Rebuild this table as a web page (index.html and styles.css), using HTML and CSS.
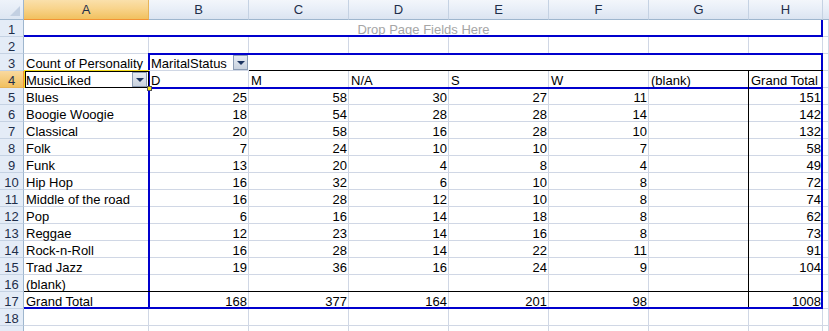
FILE: index.html
```html
<!DOCTYPE html>
<html>
<head>
<meta charset="utf-8">
<link rel="stylesheet" href="styles.css">
</head>
<body>
<div class="sheet">
  <div class="cells">
    <div class="corner"><span class="tri"></span></div>
    <div class="ch ch-sel">A</div><div class="ch">B</div><div class="ch">C</div><div class="ch">D</div><div class="ch">E</div><div class="ch">F</div><div class="ch">G</div><div class="ch">H</div><div class="ch ch-last"></div>

    <div class="rh">1</div><div class="c span-ah page">Drop Page Fields Here</div><div class="c"></div>

    <div class="rh">2</div><div class="c"></div><div class="c"></div><div class="c"></div><div class="c"></div><div class="c"></div><div class="c"></div><div class="c"></div><div class="c"></div><div class="c"></div>

    <div class="rh">3</div><div class="c">Count of Personality</div><div class="c fieldcell nor">MaritalStatus<span class="dd"></span></div><div class="c span-ch"></div><div class="c"></div>

    <div class="rh rh-sel">4</div><div class="c fieldcell">MusicLiked<span class="dd"></span></div><div class="c">D</div><div class="c">M</div><div class="c">N/A</div><div class="c">S</div><div class="c">W</div><div class="c">(blank)</div><div class="c">Grand Total</div><div class="c"></div>

    <div class="rh">5</div><div class="c">Blues</div><div class="c n">25</div><div class="c n">58</div><div class="c n">30</div><div class="c n">27</div><div class="c n">11</div><div class="c n"></div><div class="c n">151</div><div class="c"></div>
    <div class="rh">6</div><div class="c">Boogie Woogie</div><div class="c n">18</div><div class="c n">54</div><div class="c n">28</div><div class="c n">28</div><div class="c n">14</div><div class="c n"></div><div class="c n">142</div><div class="c"></div>
    <div class="rh">7</div><div class="c">Classical</div><div class="c n">20</div><div class="c n">58</div><div class="c n">16</div><div class="c n">28</div><div class="c n">10</div><div class="c n"></div><div class="c n">132</div><div class="c"></div>
    <div class="rh">8</div><div class="c">Folk</div><div class="c n">7</div><div class="c n">24</div><div class="c n">10</div><div class="c n">10</div><div class="c n">7</div><div class="c n"></div><div class="c n">58</div><div class="c"></div>
    <div class="rh">9</div><div class="c">Funk</div><div class="c n">13</div><div class="c n">20</div><div class="c n">4</div><div class="c n">8</div><div class="c n">4</div><div class="c n"></div><div class="c n">49</div><div class="c"></div>
    <div class="rh">10</div><div class="c">Hip Hop</div><div class="c n">16</div><div class="c n">32</div><div class="c n">6</div><div class="c n">10</div><div class="c n">8</div><div class="c n"></div><div class="c n">72</div><div class="c"></div>
    <div class="rh">11</div><div class="c">Middle of the road</div><div class="c n">16</div><div class="c n">28</div><div class="c n">12</div><div class="c n">10</div><div class="c n">8</div><div class="c n"></div><div class="c n">74</div><div class="c"></div>
    <div class="rh">12</div><div class="c">Pop</div><div class="c n">6</div><div class="c n">16</div><div class="c n">14</div><div class="c n">18</div><div class="c n">8</div><div class="c n"></div><div class="c n">62</div><div class="c"></div>
    <div class="rh">13</div><div class="c">Reggae</div><div class="c n">12</div><div class="c n">23</div><div class="c n">14</div><div class="c n">16</div><div class="c n">8</div><div class="c n"></div><div class="c n">73</div><div class="c"></div>
    <div class="rh">14</div><div class="c">Rock-n-Roll</div><div class="c n">16</div><div class="c n">28</div><div class="c n">14</div><div class="c n">22</div><div class="c n">11</div><div class="c n"></div><div class="c n">91</div><div class="c"></div>
    <div class="rh">15</div><div class="c">Trad Jazz</div><div class="c n">19</div><div class="c n">36</div><div class="c n">16</div><div class="c n">24</div><div class="c n">9</div><div class="c n"></div><div class="c n">104</div><div class="c"></div>
    <div class="rh">16</div><div class="c">(blank)</div><div class="c n"></div><div class="c n"></div><div class="c n"></div><div class="c n"></div><div class="c n"></div><div class="c n"></div><div class="c n"></div><div class="c"></div>
    <div class="rh">17</div><div class="c">Grand Total</div><div class="c n">168</div><div class="c n">377</div><div class="c n">164</div><div class="c n">201</div><div class="c n">98</div><div class="c n"></div><div class="c n">1008</div><div class="c"></div>

    <div class="rh">18</div><div class="c"></div><div class="c"></div><div class="c"></div><div class="c"></div><div class="c"></div><div class="c"></div><div class="c"></div><div class="c"></div><div class="c"></div>
    <div class="rh"></div><div class="c"></div><div class="c"></div><div class="c"></div><div class="c"></div><div class="c"></div><div class="c"></div><div class="c"></div><div class="c"></div><div class="c"></div>
  </div>

  <div class="frames">
    <div class="f-page"></div>
    <div class="f-main"></div>
    <div class="f-colhdr"></div>
    <div class="f-total-col"></div>
    <div class="f-total-row"></div>
    <div class="f-active"><div class="f-active-in"></div><span class="handle"></span></div>
  </div>
</div>
</body>
</html>
```

FILE: styles.css
```css
html, body {
  margin: 0;
  padding: 0;
  background: #ffffff;
}

.sheet {
  display: grid;
  width: 829px;
  height: 331px;
  overflow: hidden;
  font-family: "Liberation Sans", Arial, sans-serif;
  font-size: 13px;
  color: #000;
}

.cells, .frames {
  grid-area: 1 / 1;
  display: grid;
  grid-template-columns: 24px 125px 100px 100px 100px 100px 100px 100px 74px 1fr;
  grid-template-rows: 20px repeat(19, 17px);
}

.frames {
  pointer-events: none;
}

/* headers */
.corner {
  background: linear-gradient(#eef3fa, #dde6f2);
  border-right: 1px solid #9eb6ce;
  border-bottom: 1px solid #9eb6ce;
  box-sizing: border-box;
  display: flex;
  justify-content: flex-end;
  align-items: flex-end;
  padding: 0 3px 3px 0;
}
.tri {
  width: 0;
  height: 0;
  border-left: 10px solid transparent;
  border-bottom: 10px solid #c3d0e2;
}

.ch {
  box-sizing: border-box;
  background: linear-gradient(#f3f6fb 0%, #e9eff8 45%, #dbe4f1 100%);
  border-right: 1px solid #c5d2e3;
  border-bottom: 1px solid #9eb6ce;
  text-align: center;
  line-height: 19px;
  color: #1e2e4a;
  font-size: 13px;
}
.ch-sel {
  background: linear-gradient(#fae0ab 0%, #f8d48c 45%, #f1c15f 100%);
  border-bottom: 1px solid #f29436;
  border-right: 1px solid #e7b457;
}
.ch-last {
  border-right: none;
}

.rh {
  box-sizing: border-box;
  background: #e4ecf7;
  border-right: 1px solid #9eb6ce;
  border-bottom: 1px solid #c5d2e3;
  text-align: center;
  padding-top: 2px;
  line-height: 16px;
  color: #1e2e4a;
  overflow: hidden;
}
.rh-sel {
  background: linear-gradient(#f9d99f, #f1c15f);
  border-right: 1px solid #f29436;
  border-bottom: 1px solid #e7b457;
}

/* cells */
.c {
  box-sizing: border-box;
  border-right: 1px solid #d0d7e5;
  border-bottom: 1px solid #d0d7e5;
  padding: 2px 2px 0 2px;
  line-height: 16px;
  white-space: nowrap;
  overflow: visible;
}
.n {
  text-align: right;
  padding-right: 1px;
}
.nor {
  border-right: none;
}
.span-ah {
  grid-column: 2 / 10;
}
.span-ch {
  grid-column: 4 / 10;
}
.page {
  text-align: center;
  color: #a6a6a6;
  border-right: none;
}

.fieldcell {
  position: relative;
}
.dd {
  position: absolute;
  right: 1px;
  top: 1px;
  width: 15px;
  height: 15px;
  box-sizing: border-box;
  border: 1px solid #8c9db4;
  background: linear-gradient(#e6ebf2, #c9d2de);
  display: flex;
  align-items: center;
  justify-content: center;
}
.dd::after {
  content: "";
  width: 0;
  height: 0;
  border-left: 4px solid transparent;
  border-right: 4px solid transparent;
  border-top: 4px solid #1d3560;
  margin-top: 1px;
}

/* pivot frames */
.f-page {
  grid-row: 2;
  grid-column: 2 / 10;
  border-bottom: 2px solid #0000cd;
  border-right: 2px solid #0000cd;
}
.f-main {
  grid-row: 4 / 19;
  grid-column: 3 / 10;
  margin-top: -1px;
  margin-left: -1px;
  border: 2px solid #0000cd;
}
.f-colhdr {
  grid-row: 5;
  grid-column: 3 / 10;
  margin: -1px 0 -1px -1px;
  border-top: 1px solid #000;
  border-bottom: 2px solid #0000cd;
}
.f-total-col {
  grid-row: 5 / 19;
  grid-column: 9;
  margin-top: -1px;
  margin-left: -1px;
  border-left: 1px solid #000;
}
.f-total-row {
  grid-row: 18;
  grid-column: 2 / 10;
  margin-top: -1px;
  border-top: 1px solid #000;
  border-bottom: 2px solid #0000cd;
}
.f-active {
  grid-row: 5;
  grid-column: 2;
  margin-top: -1px;
  border-top: 1px solid #f3dc1a;
  border-left: 1px solid #f3dc1a;
  position: relative;
  display: flex;
}
.f-active-in {
  flex: 1;
  border: 1px solid #000;
}
.handle {
  position: absolute;
  right: -3px;
  bottom: -3px;
  width: 5px;
  height: 5px;
  box-sizing: border-box;
  background: #f6e51c;
  border: 1px solid #555;
}
```
